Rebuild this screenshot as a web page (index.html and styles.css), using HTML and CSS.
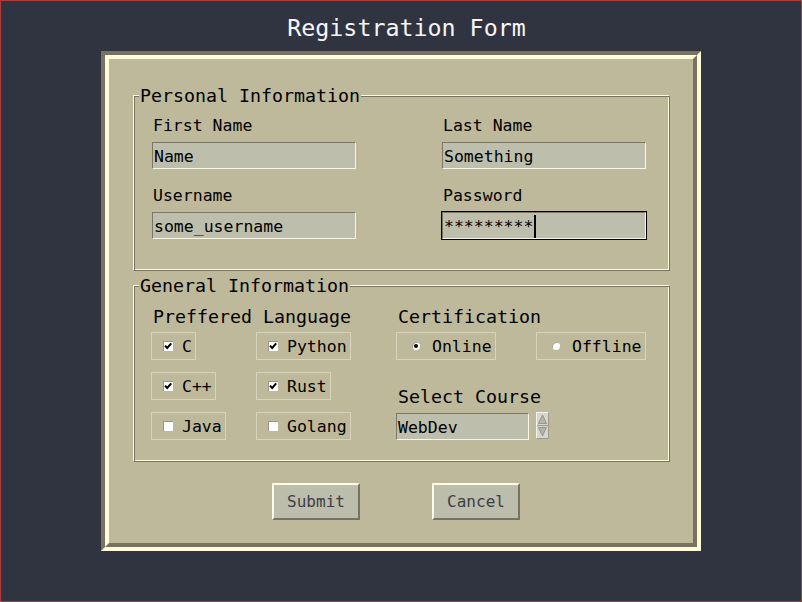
FILE: index.html
```html
<!DOCTYPE html>
<html>
<head>
<meta charset="utf-8">
<title>Registration Form</title>
<link rel="stylesheet" href="styles.css">
</head>
<body>
<div class="window">
  <h1 class="title">Registration Form</h1>
  <div class="frame">
    <div class="frame-inner">
      <section class="group personal">
        <div class="group-title">Personal Information</div>
        <div class="fields">
          <div class="field">
            <div class="label">First Name</div>
            <div class="entry">Name</div>
          </div>
          <div class="field">
            <div class="label">Last Name</div>
            <div class="entry">Something</div>
          </div>
          <div class="field">
            <div class="label">Username</div>
            <div class="entry">some_username</div>
          </div>
          <div class="field">
            <div class="label">Password</div>
            <div class="entry focused">*********<span class="caret"></span></div>
          </div>
        </div>
      </section>

      <section class="group general">
        <div class="group-title">General Information</div>
        <div class="general-grid">
          <div class="col">
            <div class="heading">Preffered Language</div>
            <div class="checks">
              <div class="check"><span class="ind"><svg viewBox="0 0 10 10" width="10" height="10"><path d="M2 4.6 L4.2 7 L8.2 2.4" fill="none" stroke="#000" stroke-width="2"/></svg></span><span>C</span></div>
              <div class="check"><span class="ind"><svg viewBox="0 0 10 10" width="10" height="10"><path d="M2 4.6 L4.2 7 L8.2 2.4" fill="none" stroke="#000" stroke-width="2"/></svg></span><span>Python</span></div>
              <div class="check"><span class="ind"><svg viewBox="0 0 10 10" width="10" height="10"><path d="M2 4.6 L4.2 7 L8.2 2.4" fill="none" stroke="#000" stroke-width="2"/></svg></span><span>C++</span></div>
              <div class="check"><span class="ind"><svg viewBox="0 0 10 10" width="10" height="10"><path d="M2 4.6 L4.2 7 L8.2 2.4" fill="none" stroke="#000" stroke-width="2"/></svg></span><span>Rust</span></div>
              <div class="check"><span class="ind"></span><span>Java</span></div>
              <div class="check"><span class="ind"></span><span>Golang</span></div>
            </div>
          </div>
          <div class="col">
            <div class="heading">Certification</div>
            <div class="radios">
              <div class="radio"><span class="rind on"></span><span>Online</span></div>
              <div class="radio"><span class="rind"></span><span>Offline</span></div>
            </div>
            <div class="heading course">Select Course</div>
            <div class="spin">
              <div class="entry spin-entry">WebDev</div>
              <div class="spin-btns">
                <svg viewBox="0 0 13 27" width="13" height="27">
                  <rect x="0" y="0" width="13" height="27" fill="#d6d6cc"/>
                  <path d="M0.5 26.5 V0.5 H12.5" fill="none" stroke="#f4f4ec"/>
                  <path d="M12.5 0.5 V26.5 H0.5" fill="none" stroke="#9a9a90"/>
                  <line x1="1" y1="13.5" x2="12" y2="13.5" stroke="#9a9a90"/>
                  <path d="M2.5 11.5 L6.5 3 L10.5 11.5 Z" fill="#b4b4aa" stroke="#8a8a80" stroke-width="0.8"/>
                  <path d="M2.5 15.5 L6.5 24 L10.5 15.5 Z" fill="#b4b4aa" stroke="#8a8a80" stroke-width="0.8"/>
                </svg>
              </div>
            </div>
          </div>
        </div>
      </section>

      <div class="buttons">
        <button class="btn" type="button">Submit</button>
        <button class="btn" type="button">Cancel</button>
      </div>
    </div>
  </div>
</div>
</body>
</html>
```

FILE: styles.css
```css
* {
  box-sizing: border-box;
}

body {
  margin: 0;
  background: #303440;
  font-family: "DejaVu Sans Mono", "Liberation Mono", monospace;
}

.window {
  width: 802px;
  height: 602px;
  border: 1px solid #b03c3c;
  background: #303440;
  overflow: hidden;
}

.title {
  margin: 0;
  padding: 13px 0 10px 11px;
  font-size: 23.3px;
  line-height: 27px;
  font-weight: normal;
  color: #f6f6f6;
  text-align: center;
}

.frame {
  width: 600px;
  height: 500px;
  margin: 0 auto;
  border: 4px solid;
  border-color: #787260 #fffcdc #fffcdc #787260;
}

.frame-inner {
  height: 100%;
  border: 4px solid;
  border-color: #fffcdc #787260 #787260 #fffcdc;
  background: #bfb99c;
  padding: 36px 23px 0 24px;
}

.group {
  border: 1px solid;
  border-color: #fffcdc #787260 #787260 #fffcdc;
  box-shadow: inset 1px 1px 0 #787260, inset -1px -1px 0 #fffcdc;
}

.group.general {
  margin-top: 14px;
}

.group-title {
  width: max-content;
  margin: -11px 0 0 5px;
  padding: 0 1px;
  background: #bfb99c;
  font-size: 18.3px;
  line-height: 21px;
  color: #000;
}

.fields {
  display: grid;
  grid-template-columns: 290px 204px;
  row-gap: 16px;
  padding: 9px 0 31px 18px;
}

.label {
  font-size: 16.5px;
  line-height: 20px;
  color: #000;
  padding-left: 1px;
  margin-top: 1px;
  margin-bottom: 6px;
}

.entry {
  height: 27px;
  display: flex;
  align-items: center;
  border: 1px solid;
  border-color: #7c7664 #f8f6e4 #f8f6e4 #7c7664;
  background: #bebeac;
  font-size: 16.5px;
  color: #000;
  padding: 1px 0 0 1px;
  white-space: pre;
}

.fields .entry {
  width: 204px;
}

.entry.focused {
  outline: 1px solid #000;
}

.caret {
  display: inline-block;
  width: 2px;
  height: 23px;
  background: #000;
  margin-left: 1px;
}

.general-grid {
  display: grid;
  grid-template-columns: 245px auto;
  padding: 10px 0 21px 17px;
}

.heading {
  font-size: 18.3px;
  line-height: 21px;
  color: #000;
  padding-left: 2px;
}

.heading.course {
  margin-top: 26px;
}

.checks {
  display: grid;
  grid-template-columns: 105px 105px;
  row-gap: 12px;
  justify-items: start;
  margin-top: 5px;
}

.check,
.radio {
  display: inline-flex;
  align-items: center;
  height: 28px;
  border: 1px solid #d8d3bb;
  font-size: 16.5px;
  color: #000;
}

.check {
  padding: 0 3px 0 11px;
  gap: 9px;
}

.ind {
  width: 10px;
  height: 10px;
  background: #fff;
  box-shadow: inset 1px 1px 0 #9a9480;
  display: inline-flex;
}

.radios {
  display: grid;
  grid-template-columns: 140px auto;
  justify-items: start;
  margin-top: 5px;
}

.radio {
  padding: 0 3px 0 15px;
  gap: 12px;
}

.rind {
  width: 8px;
  height: 8px;
  border-radius: 50%;
  background: #fff;
  box-shadow: inset 1px 1px 0 #a8a290;
  position: relative;
}

.rind.on::after {
  content: "";
  position: absolute;
  left: 2px;
  top: 2px;
  width: 4px;
  height: 4px;
  border-radius: 50%;
  background: #000;
}

.spin {
  display: flex;
  align-items: flex-start;
  margin-top: 6px;
}

.spin-entry {
  width: 133px;
  padding-left: 1px;
}

.spin-btns {
  margin-left: 7px;
  margin-top: -1px;
  display: flex;
}

.buttons {
  display: flex;
  gap: 72px;
  margin-top: 21px;
  padding-left: 139px;
}

.btn {
  width: 88px;
  height: 37px;
  border: 2px solid;
  border-color: #fcfce8 #787260 #787260 #fcfce8;
  background: #bdbdab;
  font-family: "DejaVu Sans Mono", "Liberation Mono", monospace;
  font-size: 16px;
  color: #3b4048;
  padding: 0;
}
```
